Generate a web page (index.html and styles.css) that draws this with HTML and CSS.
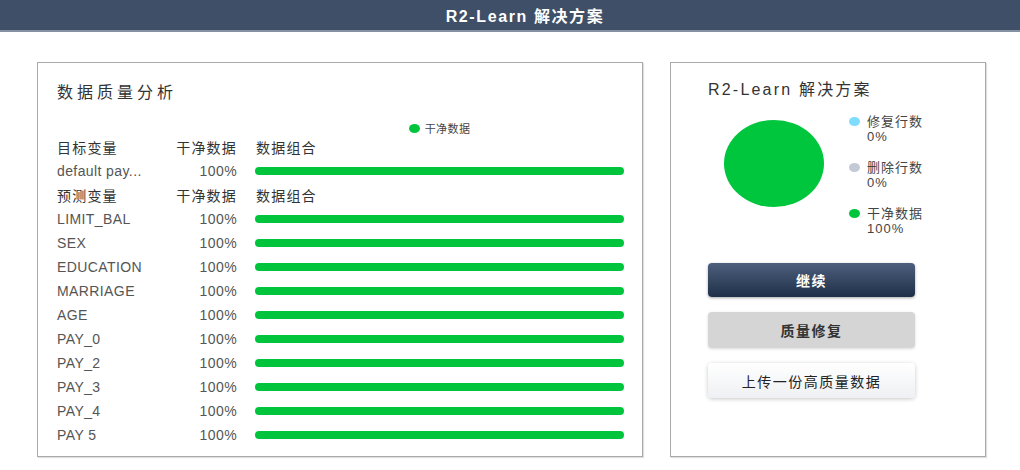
FILE: index.html
```html
<!DOCTYPE html>
<html lang="zh">
<head>
<meta charset="utf-8">
<title>R2-Learn 解决方案</title>
<link rel="stylesheet" href="styles.css">
</head>
<body>
<header class="topbar"><span class="topbar-title">R2-Learn 解决方案</span></header>
<main class="main">
  <section class="panel panel-left">
    <h2 class="panel-title">数据质量分析</h2>
    <div class="table">
      <div></div><div></div>
      <div class="legend-cell"><span class="dot dot-green"></span><span class="legend-text">干净数据</span></div>

      <div class="th">目标变量</div><div class="th pct">干净数据</div><div class="th bar-head">数据组合</div>
      <div class="name">default pay...</div><div class="pct">100%</div><div class="bar-cell"><div class="bar" style="width:100%"></div></div>

      <div class="th">预测变量</div><div class="th pct">干净数据</div><div class="th bar-head">数据组合</div>
      <div class="name">LIMIT_BAL</div><div class="pct">100%</div><div class="bar-cell"><div class="bar" style="width:100%"></div></div>
      <div class="name">SEX</div><div class="pct">100%</div><div class="bar-cell"><div class="bar" style="width:100%"></div></div>
      <div class="name">EDUCATION</div><div class="pct">100%</div><div class="bar-cell"><div class="bar" style="width:100%"></div></div>
      <div class="name">MARRIAGE</div><div class="pct">100%</div><div class="bar-cell"><div class="bar" style="width:100%"></div></div>
      <div class="name">AGE</div><div class="pct">100%</div><div class="bar-cell"><div class="bar" style="width:100%"></div></div>
      <div class="name">PAY_0</div><div class="pct">100%</div><div class="bar-cell"><div class="bar" style="width:100%"></div></div>
      <div class="name">PAY_2</div><div class="pct">100%</div><div class="bar-cell"><div class="bar" style="width:100%"></div></div>
      <div class="name">PAY_3</div><div class="pct">100%</div><div class="bar-cell"><div class="bar" style="width:100%"></div></div>
      <div class="name">PAY_4</div><div class="pct">100%</div><div class="bar-cell"><div class="bar" style="width:100%"></div></div>
      <div class="name">PAY 5</div><div class="pct">100%</div><div class="bar-cell"><div class="bar" style="width:100%"></div></div>
    </div>
  </section>
  <section class="panel panel-right">
    <h2 class="panel-title panel-title-right">R2-Learn 解决方案</h2>
    <div class="chart-row">
      <div class="pie"></div>
      <ul class="pie-legend">
        <li class="pie-item"><span class="dot dot-cyan"></span><span class="pie-text">修复行数<br>0%</span></li>
        <li class="pie-item"><span class="dot dot-gray"></span><span class="pie-text">删除行数<br>0%</span></li>
        <li class="pie-item"><span class="dot dot-green"></span><span class="pie-text">干净数据<br>100%</span></li>
      </ul>
    </div>
    <div class="buttons">
      <button class="btn btn-primary">继续</button>
      <button class="btn btn-grey">质量修复</button>
      <button class="btn btn-light">上传一份高质量数据</button>
    </div>
  </section>
</main>
</body>
</html>
```

FILE: styles.css
```css
* { box-sizing: border-box; }
html, body { margin: 0; padding: 0; background: #fff; }
body {
  font-family: "Liberation Sans", "Noto Sans CJK SC", sans-serif;
  color: #333;
  width: 1020px;
  height: 470px;
  overflow: hidden;
}
.topbar {
  height: 32px;
  background: #3e4f67;
  border-bottom: 2px solid #8391a3;
  display: flex;
  align-items: center;
  justify-content: center;
  padding-left: 30px;
}
.topbar-title {
  color: #fff;
  font-weight: bold;
  font-size: 16px;
  letter-spacing: 1.6px;
}
.main {
  display: flex;
  gap: 27px;
  padding: 30px 0 0 37px;
}
.panel {
  height: 395px;
  border: 1px solid #a9a9a9;
  box-shadow: 1px 1px 1px rgba(0,0,0,0.12);
  background: #fff;
}
.panel-left {
  width: 606px;
  padding: 20px 18px 0 19px;
}
.panel-right {
  width: 316px;
  padding: 17px 0 0 37px;
}
.panel-title {
  margin: 0;
  font-size: 16px;
  font-weight: normal;
  line-height: 20px;
  letter-spacing: 4px;
  color: #333;
}
.panel-title-right {
  letter-spacing: 2.2px;
}
.table {
  display: grid;
  grid-template-columns: 115px 65px 1fr;
  grid-template-rows: 14px;
  grid-auto-rows: 24px;
  margin-top: 18px;
  font-size: 14px;
  letter-spacing: 0.4px;
  color: #555;
}
.table > div { display: flex; align-items: center; white-space: nowrap; }
.legend-cell {
  justify-content: center;
  font-size: 11px;
  color: #444;
  gap: 5px;
  padding-left: 18px;
}
.th { color: #333; letter-spacing: 1.2px; }
.table > .pct { justify-content: flex-end; }
.bar-head { padding-left: 19px; }
.bar-cell { padding-left: 18px; }
.bar {
  height: 8px;
  border-radius: 4px;
  background: #00c43c;
}
.dot {
  display: inline-block;
  width: 11px;
  height: 9px;
  border-radius: 50%;
  flex: none;
}
.dot-green { background: #00c43c; }
.dot-cyan { background: #7fdcff; }
.dot-gray { background: #c3cad6; }
.chart-row {
  display: flex;
  margin-top: 14px;
}
.pie {
  width: 100px;
  height: 87px;
  border-radius: 50%;
  background: #00c63e;
  margin: 6px 0 0 16px;
}
.pie-legend {
  list-style: none;
  margin: 0 0 0 25px;
  padding: 0;
  display: flex;
  flex-direction: column;
  gap: 16px;
}
.pie-item {
  display: flex;
  align-items: flex-start;
  gap: 7px;
}
.pie-item .dot { margin-top: 3px; }
.pie-text {
  font-size: 13px;
  line-height: 15px;
  letter-spacing: 1px;
  color: #444;
}
.buttons {
  display: flex;
  flex-direction: column;
  gap: 15px;
  margin-top: 27px;
  width: 207px;
}
.btn {
  font-family: inherit;
  border: none;
  border-radius: 4px;
  font-size: 14px;
  letter-spacing: 1.5px;
  cursor: pointer;
  padding: 0;
}
.btn-primary {
  height: 34px;
  color: #fff;
  font-weight: bold;
  background: linear-gradient(#4d5f7d, #1f2f48);
  box-shadow: 0 1px 3px rgba(0,0,0,0.35);
}
.btn-grey {
  height: 36px;
  color: #333;
  font-weight: bold;
  background: #d5d5d5;
  box-shadow: 0 1px 3px rgba(0,0,0,0.15);
}
.btn-light {
  height: 35px;
  color: #222;
  background: linear-gradient(#ffffff, #eef0f3);
  box-shadow: 0 1px 4px rgba(0,0,0,0.22);
}
```
